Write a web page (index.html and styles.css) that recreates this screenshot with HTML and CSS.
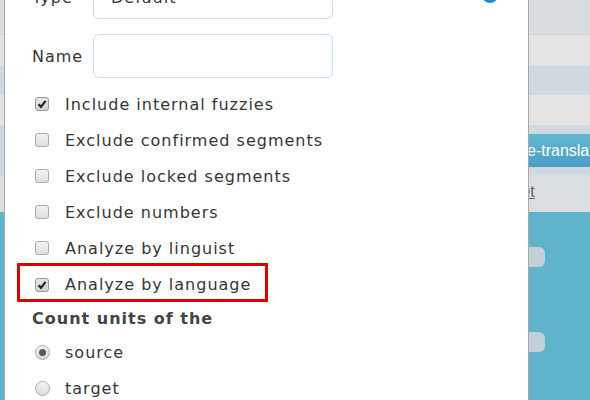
FILE: index.html
```html
<!DOCTYPE html>
<html>
<head>
<meta charset="utf-8">
<link rel="stylesheet" href="styles.css">
</head>
<body>
<div class="page">
  <div class="bg">
    <div class="band b-top"></div>
    <div class="band b-light"></div>
    <div class="band b-blue"></div>
    <div class="band b-light2"></div>
    <div class="toolbar"><span class="btn">Pre-translate</span></div>
    <div class="linkrow"><a class="lnk">Reset</a></div>
    <div class="blue">
      <div class="pill"></div>
      <div class="pill pill2"></div>
    </div>
  </div>

  <div class="dialog">
    <div class="form">
      <div class="field">
        <label class="lbl">Type</label>
        <div class="select">
          <span>Default</span>
          <svg class="chev" width="10" height="6" viewBox="0 0 10 6"><path d="M1 1 L5 5 L9 1" fill="none" stroke="#555" stroke-width="1.6"/></svg>
        </div>
        <span class="help"></span>
      </div>
      <div class="field">
        <label class="lbl">Name</label>
        <div class="input"></div>
      </div>
      <ul class="opts">
        <li class="opt"><span class="box checked"><svg width="10" height="10" viewBox="0 0 10 10"><path d="M1.6 5.2 L4 7.8 L8.6 1.8" fill="none" stroke="#222" stroke-width="2.2"/></svg></span>Include internal fuzzies</li>
        <li class="opt"><span class="box"></span>Exclude confirmed segments</li>
        <li class="opt"><span class="box"></span>Exclude locked segments</li>
        <li class="opt"><span class="box"></span>Exclude numbers</li>
        <li class="opt"><span class="box"></span>Analyze by linguist</li>
        <li class="opt hl"><span class="box checked"><svg width="10" height="10" viewBox="0 0 10 10"><path d="M1.6 5.2 L4 7.8 L8.6 1.8" fill="none" stroke="#222" stroke-width="2.2"/></svg></span>Analyze by language</li>
      </ul>
      <div class="heading">Count units of the</div>
      <ul class="opts radios">
        <li class="opt"><span class="radio on"></span>source</li>
        <li class="opt"><span class="radio"></span>target</li>
      </ul>
    </div>
  </div>
</div>
</body>
</html>
```
FILE: styles.css
```css
html, body {
  margin: 0;
  padding: 0;
}
body {
  font-family: "DejaVu Sans", Verdana, sans-serif;
  font-size: 16px;
  letter-spacing: 1px;
  color: #363636;
}
.page {
  position: relative;
  width: 590px;
  height: 400px;
  overflow: hidden;
}
.bg {
  display: flex;
  flex-direction: column;
  height: 400px;
  letter-spacing: 0;
}
.band { flex: none; }
.b-top { height: 35px; background: #d9dde0; border-bottom: 1px solid #ccd2d6; box-sizing: border-box; }
.b-light { height: 31px; background: #e4e4e4; }
.b-blue { height: 29px; background: #cfd9df; }
.b-light2 { height: 30px; background: #e4e4e4; }
.toolbar {
  height: 50px;
  box-sizing: border-box;
  padding: 9px 0 0 501px;
  background: #d0d9df;
  white-space: nowrap;
}
.btn {
  display: inline-flex;
  align-items: center;
  height: 33px;
  padding: 0 10px;
  font-family: "Liberation Sans", Arial, sans-serif;
  font-size: 16px;
  color: #fff;
  background: linear-gradient(#62b8d1, #4a9dc5);
  border-radius: 3px;
}
.linkrow {
  height: 37px;
  box-sizing: border-box;
  padding: 8px 0 0 493px;
  background: #dadee1;
  font-family: "Liberation Sans", Arial, sans-serif;
  font-size: 16px;
}
.lnk {
  color: #666;
  text-decoration: underline;
}
.blue {
  flex: 1;
  background: #5fb3cb;
  padding-top: 35px;
}
.pill {
  width: 65px;
  height: 20px;
  margin-left: 480px;
  border-radius: 6px;
  background: #c3d0d7;
}
.pill2 { margin-top: 65px; }

.dialog {
  position: absolute;
  left: 4px;
  top: 0;
  width: 523px;
  height: 400px;
  background: #fff;
  border-left: 1px solid #a8a8a8;
  border-right: 1px solid #a8a8a8;
  overflow: hidden;
}
.form {
  margin-top: -25px;
  padding-left: 27px;
}
.field {
  display: flex;
  align-items: center;
  height: 44px;
}
.field + .field { margin-top: 15px; }
.lbl { width: 61px; flex: none; }
.select, .input {
  width: 240px;
  height: 44px;
  box-sizing: border-box;
  border: 1px solid #c6e0ea;
  border-radius: 6px;
  flex: none;
}
.select {
  display: flex;
  align-items: center;
  justify-content: space-between;
  padding: 0 13px 0 17px;
}
.help {
  width: 16px;
  height: 16px;
  border-radius: 50%;
  background: #1f8fd5;
  margin-left: 149px;
  align-self: flex-start;
  margin-top: 12px;
}
.opts {
  list-style: none;
  margin: 8px 0 0;
  padding: 0;
}
.radios { margin-top: 0; }
.opt {
  display: flex;
  align-items: center;
  height: 36px;
  padding-left: 3px;
}
.box {
  width: 14px;
  height: 14px;
  box-sizing: border-box;
  border: 1px solid #a9a9a9;
  border-radius: 3px;
  background: linear-gradient(#f4f4f4, #dedede);
  margin-right: 16px;
  display: flex;
  align-items: center;
  justify-content: center;
  flex: none;
}
.box.checked {
  background: linear-gradient(#e6e6e6, #d2d2d2);
  border-color: #9a9a9a;
}
.opt.hl {
  margin: -3px 0 0 -15px;
  width: 251px;
  height: 39px;
  box-sizing: border-box;
  border: 3px solid #e00000;
  padding: 4px 0 0 15px;
}
.heading {
  font-weight: bold;
  color: #444;
  height: 32px;
  display: flex;
  align-items: center;
}
.radio {
  width: 15px;
  height: 15px;
  box-sizing: border-box;
  border: 1px solid #ababab;
  border-radius: 50%;
  background: linear-gradient(#f4f4f4, #dadada);
  margin-right: 15px;
  display: flex;
  align-items: center;
  justify-content: center;
  flex: none;
}
.radio.on::after {
  content: "";
  width: 7px;
  height: 7px;
  border-radius: 50%;
  background: #5a5a5a;
}
```
